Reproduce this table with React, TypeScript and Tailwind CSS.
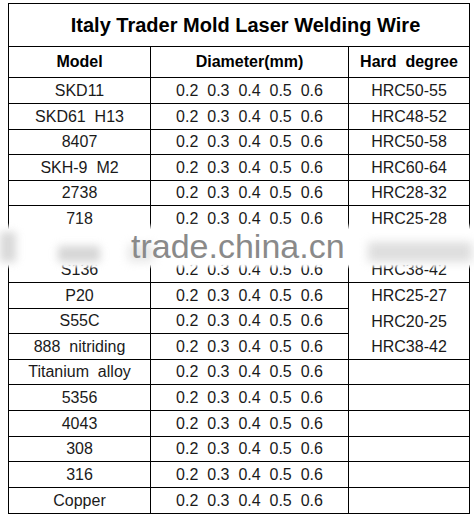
import React from 'react';

interface WireRow {
  model: string;
  hrc: string;
  h: string;
  diameter?: boolean;
  hrcBorder?: boolean;
}

const DIAMETERS = '0.2  0.3  0.4  0.5  0.6';

const rows: WireRow[] = [
  { model: 'SKD11', hrc: 'HRC50-55', h: 'h-[26px]' },
  { model: 'SKD61  H13', hrc: 'HRC48-52', h: 'h-[26px]' },
  { model: '8407', hrc: 'HRC50-58', h: 'h-[25px]' },
  { model: 'SKH-9  M2', hrc: 'HRC60-64', h: 'h-[26px]' },
  { model: '2738', hrc: 'HRC28-32', h: 'h-[25px]' },
  { model: '718', hrc: 'HRC25-28', h: 'h-[26px]' },
  // row hidden under the watermark band
  { model: '', hrc: '', h: 'h-[26px]', diameter: false },
  { model: 'S136', hrc: 'HRC38-42', h: 'h-[25px]' },
  { model: 'P20', hrc: 'HRC25-27', h: 'h-[26px]', hrcBorder: false },
  { model: 'S55C', hrc: 'HRC20-25', h: 'h-[25px]', hrcBorder: false },
  { model: '888  nitriding', hrc: 'HRC38-42', h: 'h-[26px]' },
  { model: 'Titanium  alloy', hrc: '', h: 'h-[25px]' },
  { model: '5356', hrc: '', h: 'h-[26px]' },
  { model: '4043', hrc: '', h: 'h-[26px]' },
  { model: '308', hrc: '', h: 'h-[25px]' },
  { model: '316', hrc: '', h: 'h-[26px]' },
  { model: 'Copper', hrc: '', h: 'h-[25px]', },
];

export default function App() {
  return (
    <div
      className="relative w-[474px] h-[519px] bg-white overflow-hidden text-[#1a1a1a]"
      style={{ fontFamily: '"Liberation Sans", Arial, sans-serif' }}
    >
      <div className="ml-[8px] mt-[3px] w-[462px] border border-black">
        {/* Title */}
        <div className="h-[43px] border-b border-black flex items-center justify-center pl-[13px] text-[20px] font-bold text-black">
          Italy Trader Mold Laser Welding Wire
        </div>

        {/* Header */}
        <div className="h-[31px] border-b border-black flex text-[16px] font-bold text-black whitespace-pre">
          <div className="w-[142px] border-r border-black flex items-center justify-center">Model</div>
          <div className="w-[198px] border-r border-black flex items-center justify-center">Diameter(mm)</div>
          <div className="flex-1 flex items-center justify-center">Hard  degree</div>
        </div>

        {/* Body */}
        {rows.map((r, i) => {
          const last = i === rows.length - 1;
          return (
            <div key={i} className={`${r.h} flex text-[16px] whitespace-pre`}>
              <div className={`w-[142px] border-r border-black flex items-center justify-center ${last ? '' : 'border-b'}`}>
                {r.model}
              </div>
              <div className={`w-[198px] border-r border-black flex items-center justify-center ${last ? '' : 'border-b'}`}>
                {r.diameter === false ? '' : DIAMETERS}
              </div>
              <div
                className={`flex-1 border-black flex items-center justify-center ${
                  last || r.hrcBorder === false ? '' : 'border-b'
                }`}
              >
                {r.hrc}
              </div>
            </div>
          );
        })}
      </div>

      {/* Watermark band */}
      <div className="absolute left-0 top-[223px] w-full h-[46px] bg-[linear-gradient(to_bottom,rgba(255,255,255,0)_0%,#fff_14%,#fff_90%,rgba(255,255,255,0)_100%)]" />
      <div className="absolute left-0 top-[232px] w-[16px] h-[30px] bg-[#c8c8c8] blur-[4px] opacity-70" />
      <div className="absolute left-[58px] top-[246px] w-[42px] h-[16px] bg-[#c4c4c4] blur-[4px] opacity-70" />
      <div className="absolute left-[128px] top-[244px] w-[26px] h-[18px] bg-[#d0d0d0] blur-[5px] opacity-50" />
      <div className="absolute left-[368px] top-[242px] w-[104px] h-[20px] bg-[#c8c8c8] blur-[5px] opacity-60" />
      <div className="absolute left-[131px] top-[229px] text-[34px] leading-none text-[#8a8a8a] whitespace-pre">
        trade.china.cn
      </div>
    </div>
  );
}
